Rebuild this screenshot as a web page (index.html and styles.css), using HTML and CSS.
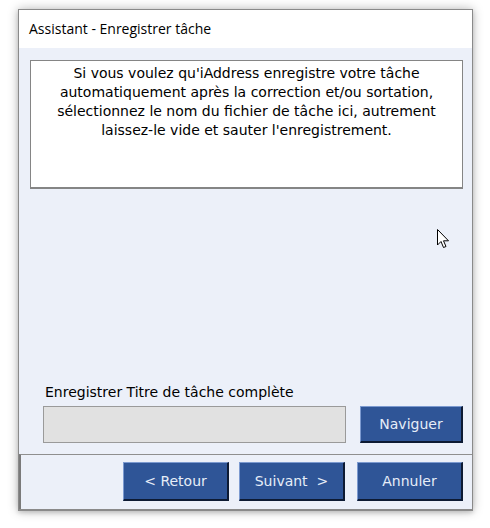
FILE: index.html
```html
<!DOCTYPE html>
<html lang="fr">
<head>
<meta charset="utf-8">
<title>Assistant - Enregistrer tâche</title>
<link rel="stylesheet" href="styles.css">
</head>
<body>
<div class="window">
  <div class="titlebar">Assistant - Enregistrer tâche</div>
  <div class="content">
    <div class="message">Si vous voulez qu'iAddress enregistre votre tâche automatiquement après la correction et/ou sortation, sélectionnez le nom du fichier de tâche ici, autrement laissez-le vide et sauter l'enregistrement.</div>
    <div class="spacer"></div>
    <div class="label">Enregistrer Titre de tâche complète</div>
    <div class="file-row">
      <div class="file-input"></div>
      <button class="btn btn-browse">Naviguer</button>
    </div>
  </div>
  <div class="footer">
    <button class="btn">&lt; Retour</button>
    <button class="btn">Suivant &nbsp;&gt;</button>
    <button class="btn btn-cancel">Annuler</button>
  </div>
  <svg class="cursor" width="13" height="20" viewBox="0 0 13 20"><path d="M0.5 0.5 L0.5 16 L4 12.5 L6.5 18.5 L9 17.5 L6.5 11.8 L11.5 11.8 Z" fill="#fff" stroke="#000" stroke-width="1" stroke-linejoin="miter"/></svg>
</div>
</body>
</html>
```
FILE: styles.css
```css
html, body {
  margin: 0;
  padding: 0;
  background: #ffffff;
}
body {
  width: 490px;
  height: 528px;
  padding: 9px 0 0 18px;
  box-sizing: border-box;
}
.window {
  position: relative;
  width: 455px;
  height: 502px;
  box-sizing: border-box;
  border: 1px solid #8a8a8a;
  border-bottom: 2px solid #8a8a8a;
  background: #ecf0f9;
  box-shadow: 0 0 10px rgba(0,0,0,0.28), 0 2px 4px rgba(0,0,0,0.12);
  display: flex;
  flex-direction: column;
}
.titlebar {
  height: 38px;
  background: #ffffff;
  font-family: "Open Sans", "Noto Sans", sans-serif;
  font-size: 14px;
  color: #000;
  padding-left: 10px;
  line-height: 37px;
  flex: none;
}
.content {
  flex: 1;
  display: flex;
  flex-direction: column;
  padding: 12px 9px 11px 11px;
}
.message {
  height: 129px;
  box-sizing: border-box;
  background: #ffffff;
  border: 1px solid #858585;
  border-bottom-width: 2px;
  font-family: "DejaVu Sans", Verdana, sans-serif;
  font-size: 14px;
  line-height: 19px;
  text-align: center;
  color: #000;
  padding: 3px 12px 0 12px;
}
.spacer { flex: 1; }
.label {
  font-family: "DejaVu Sans", Verdana, sans-serif;
  font-size: 14px;
  color: #000;
  padding-left: 15px;
  margin-bottom: 6px;
}
.file-row {
  display: flex;
  align-items: center;
  padding-left: 13px;
  gap: 14px;
}
.file-input {
  width: 303px;
  height: 37px;
  box-sizing: border-box;
  background: #e1e1e1;
  border: 1px solid #9a9a9a;
}
.btn {
  width: 106px;
  height: 39px;
  box-sizing: border-box;
  background: #2f5597;
  border-top: 1px solid #7c9ad0;
  border-left: 1px solid #7c9ad0;
  border-right: 2px solid #0d1a33;
  border-bottom: 2px solid #0d1a33;
  color: #e6edf8;
  font-family: "DejaVu Sans", Verdana, sans-serif;
  font-size: 14px;
  padding: 0;
  margin: 0;
}
.btn-browse {
  width: 103px;
  height: 37px;
}
.btn-cancel {
  margin-left: 2px;
}
.footer {
  height: 55px;
  box-sizing: border-box;
  border-top: 1px solid #8f8f8f;
  border-left: 2px solid #7a7a7a;
  display: flex;
  justify-content: flex-end;
  align-items: flex-start;
  gap: 10px;
  padding: 7px 9px 0 0;
  flex: none;
}
.cursor {
  position: absolute;
  left: 418px;
  top: 219px;
}
```
